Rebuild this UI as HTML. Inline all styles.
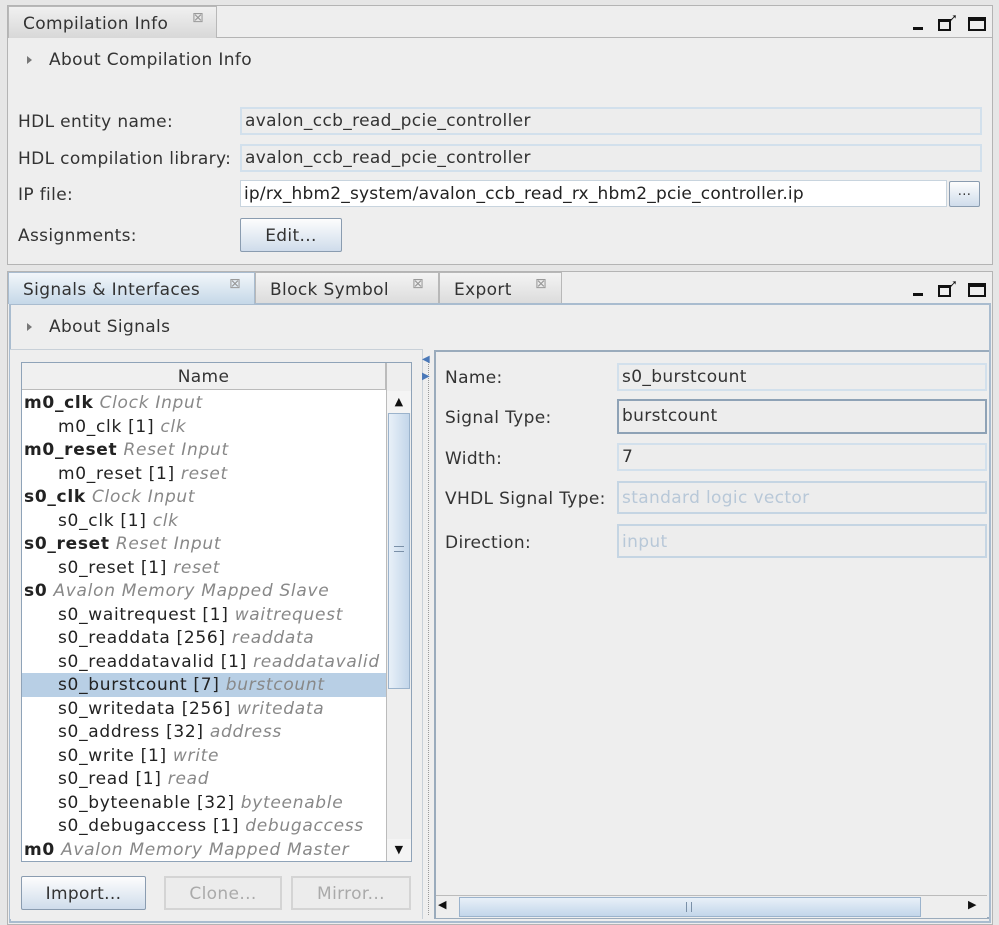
<!DOCTYPE html>
<html><head><style>
*{box-sizing:border-box;margin:0;padding:0}
body{width:999px;height:925px;background:#e6e6e6;font-family:"DejaVu Sans","Liberation Sans",sans-serif;font-size:17px;letter-spacing:0.35px;color:#333;position:relative;overflow:hidden}
.a{position:absolute}
.tab{position:absolute;border:1px solid #b8b8b8;border-bottom:none;background:linear-gradient(#f4f4f4,#dcdcdc);padding:7px 0 0 14px;white-space:nowrap}
.x{position:absolute;font-size:14px;color:#999}
.fld{position:absolute;border:2px solid #d2e0ec;background:#ededed;padding:2px 3px;white-space:nowrap;overflow:hidden}
.btn{position:absolute;border:1px solid #8a9cb0;background:linear-gradient(#fdfdfd,#cfdceb);text-align:center;padding-top:7px;border-radius:2px}
.dbtn{position:absolute;border:2px solid #d4d4d4;background:#ececec;color:#aaa;text-align:center;padding-top:6px}
.row{height:23.5px;line-height:25px;white-space:nowrap;padding-left:2px;letter-spacing:0.7px}
.row i{color:#888}
.row.c{padding-left:36px}
.lbl{position:absolute;left:445px}
</style></head><body>
<div class="a" style="left:7px;top:5px;width:986px;height:260px;border:1px solid #b4b4b4;background:#eeeeee"></div>
<div class="a" style="left:8px;top:37px;width:984px;height:1px;background:#b4b4b4"></div>
<div class="a" style="left:8px;top:6px;width:984px;height:31px;background:#eeeeee"></div>
<div class="tab" style="left:8px;top:6px;width:209px;height:32px;background:linear-gradient(#f0f0f0,#d8d8d8)">Compilation Info</div>
<div class="x" style="left:192px;top:10px">⊠</div>
<div class="a" style="left:913px;top:27px;width:10px;height:3px;background:#111"></div>
<div class="a" style="left:938px;top:19px;width:13px;height:12px;border:2px solid #111;border-top-width:3px"></div>
<div class="a" style="left:949px;top:13px;font-size:10px;color:#111">➚</div>
<div class="a" style="left:968px;top:17px;width:18px;height:14px;border:2px solid #111;border-top-width:4px"></div>
<div class="a" style="left:27px;top:56px;width:0;height:0;border-left:5px solid #777;border-top:4px solid transparent;border-bottom:4px solid transparent"></div>
<div class="a" style="left:49px;top:50px">About Compilation Info</div>
<div class="a" style="left:18px;top:112px">HDL entity name:</div>
<div class="a" style="left:18px;top:149px">HDL compilation library:</div>
<div class="a" style="left:18px;top:185px">IP file:</div>
<div class="a" style="left:18px;top:226px">Assignments:</div>
<div class="fld" style="left:240px;top:107px;width:742px;height:28px">avalon_ccb_read_pcie_controller</div>
<div class="fld" style="left:240px;top:144px;width:742px;height:28px">avalon_ccb_read_pcie_controller</div>
<div class="fld" style="left:240px;top:180px;width:707px;height:27px;background:#fff;border:1px solid #c8d4de;color:#222;padding-top:3px;letter-spacing:0.2px">ip/rx_hbm2_system/avalon_ccb_read_rx_hbm2_pcie_controller.ip</div>
<div class="btn" style="left:949px;top:181px;width:31px;height:26px;padding-top:2px;font-size:13px">...</div>
<div class="btn" style="left:240px;top:218px;width:102px;height:34px">Edit...</div>
<div class="a" style="left:7px;top:271px;width:986px;height:654px;border:1px solid #b4b4b4;background:#eeeeee"></div>
<div class="a" style="left:9px;top:303px;width:982px;height:620px;border:2px solid #a9bccf;background:#eeeeee"></div>
<div class="tab" style="left:8px;top:272px;width:247px;height:32px;background:linear-gradient(#f2f6fa,#c5d8e8);border-color:#a9bccf">Signals &amp; Interfaces</div>
<div class="x" style="left:229px;top:276px">⊠</div>
<div class="tab" style="left:255px;top:272px;width:184px;height:31px">Block Symbol</div>
<div class="x" style="left:412px;top:276px">⊠</div>
<div class="tab" style="left:439px;top:272px;width:123px;height:31px">Export</div>
<div class="x" style="left:535px;top:276px">⊠</div>
<div class="a" style="left:913px;top:293px;width:10px;height:3px;background:#111"></div>
<div class="a" style="left:938px;top:285px;width:13px;height:12px;border:2px solid #111;border-top-width:3px"></div>
<div class="a" style="left:949px;top:279px;font-size:10px;color:#111">➚</div>
<div class="a" style="left:968px;top:283px;width:18px;height:14px;border:2px solid #111;border-top-width:4px"></div>
<div class="a" style="left:27px;top:323px;width:0;height:0;border-left:5px solid #777;border-top:4px solid transparent;border-bottom:4px solid transparent"></div>
<div class="a" style="left:49px;top:317px">About Signals</div>
<div class="a" style="left:10px;top:349px;width:413px;height:570px;border-top:1px solid #c8d0d8;border-right:1px solid #c8d0d8;background:#eeeeee"></div>
<div class="a" style="left:21px;top:362px;width:391px;height:500px;border:1px solid #8fa3b8;background:#fff;overflow:hidden">
 <div style="height:27px;border-bottom:1px solid #bbb;background:#f0f0f0;text-align:center;line-height:29px;width:364px;border-right:1px solid #bbb">Name</div>
 <div style="width:364px;color:#222;padding-top:1px">
  <div class="row"><b>m0_clk</b> <i>Clock Input</i></div>
  <div class="row c">m0_clk [1] <i>clk</i></div>
  <div class="row"><b>m0_reset</b> <i>Reset Input</i></div>
  <div class="row c">m0_reset [1] <i>reset</i></div>
  <div class="row"><b>s0_clk</b> <i>Clock Input</i></div>
  <div class="row c">s0_clk [1] <i>clk</i></div>
  <div class="row"><b>s0_reset</b> <i>Reset Input</i></div>
  <div class="row c">s0_reset [1] <i>reset</i></div>
  <div class="row"><b>s0</b> <i>Avalon Memory Mapped Slave</i></div>
  <div class="row c">s0_waitrequest [1] <i>waitrequest</i></div>
  <div class="row c">s0_readdata [256] <i>readdata</i></div>
  <div class="row c">s0_readdatavalid [1] <i>readdatavalid</i></div>
  <div class="row c" style="background:#b8cfe5">s0_burstcount [7] <i>burstcount</i></div>
  <div class="row c">s0_writedata [256] <i>writedata</i></div>
  <div class="row c">s0_address [32] <i>address</i></div>
  <div class="row c">s0_write [1] <i>write</i></div>
  <div class="row c">s0_read [1] <i>read</i></div>
  <div class="row c">s0_byteenable [32] <i>byteenable</i></div>
  <div class="row c">s0_debugaccess [1] <i>debugaccess</i></div>
  <div class="row"><b>m0</b> <i>Avalon Memory Mapped Master</i></div>
 </div>
 <div class="a" style="left:364px;top:0;width:25px;height:498px;background:#eeeeee;border-left:1px solid #bbb">
  <div class="a" style="left:0;top:28px;width:24px;height:22px;background:#f4f4f4;font-size:11px;text-align:center;line-height:22px;color:#111">▲</div>
  <div class="a" style="left:1px;top:50px;width:22px;height:276px;background:linear-gradient(90deg,#e8f0f8,#c3d6ea);border:1px solid #9bb3cc"></div>
  <div class="a" style="left:7px;top:183px;width:10px;height:6px;border-top:1px solid #7a90a8;border-bottom:1px solid #7a90a8"></div>
  <div class="a" style="left:0;top:476px;width:24px;height:22px;background:#f4f4f4;font-size:11px;text-align:center;line-height:22px;color:#111">▼</div>
 </div>
</div>
<div class="btn" style="left:21px;top:876px;width:125px;height:34px">Import...</div>
<div class="dbtn" style="left:164px;top:876px;width:118px;height:34px">Clone...</div>
<div class="dbtn" style="left:291px;top:876px;width:120px;height:34px">Mirror...</div>
<div class="a" style="left:428px;top:360px;width:1px;height:555px;border-left:1px dotted #999"></div>
<div class="a" style="left:422px;top:354px;font-size:10px;color:#4a78b8">◀</div>
<div class="a" style="left:422px;top:371px;font-size:10px;color:#4a78b8">▶</div>
<div class="a" style="left:434px;top:350px;width:555px;height:569px;border:2px solid #9aabbc;border-right:none;background:#eeeeee"></div>
<div class="lbl" style="top:368px">Name:</div>
<div class="lbl" style="top:408px">Signal Type:</div>
<div class="lbl" style="top:449px">Width:</div>
<div class="lbl" style="top:489px">VHDL Signal Type:</div>
<div class="lbl" style="top:533px">Direction:</div>
<div class="fld" style="left:617px;top:363px;width:370px;height:28px">s0_burstcount</div>
<div class="fld" style="left:617px;top:399px;width:370px;height:35px;border-color:#8ea2b6;padding-top:5px">burstcount</div>
<div class="fld" style="left:617px;top:443px;width:370px;height:28px">7</div>
<div class="fld" style="left:617px;top:481px;width:370px;height:33px;color:#b8c8d8;border-color:#c5d5e3;padding-top:5px">standard logic vector</div>
<div class="fld" style="left:617px;top:524px;width:370px;height:34px;color:#b8c8d8;border-color:#c5d5e3;padding-top:6px">input</div>
<div class="a" style="left:436px;top:895px;width:551px;height:23px;background:#eeeeee;border-top:1px solid #bbb">
 <div class="a" style="left:2px;top:2px;font-size:11px;color:#111">◀</div>
 <div class="a" style="left:23px;top:1px;width:462px;height:20px;background:linear-gradient(#e8f0f8,#c3d6ea);border:1px solid #9bb3cc"></div>
 <div class="a" style="left:250px;top:6px;width:6px;height:10px;border-left:1px solid #7a90a8;border-right:1px solid #7a90a8"></div>
 <div class="a" style="left:532px;top:2px;font-size:11px;color:#111">▶</div>
</div>
</body></html>
